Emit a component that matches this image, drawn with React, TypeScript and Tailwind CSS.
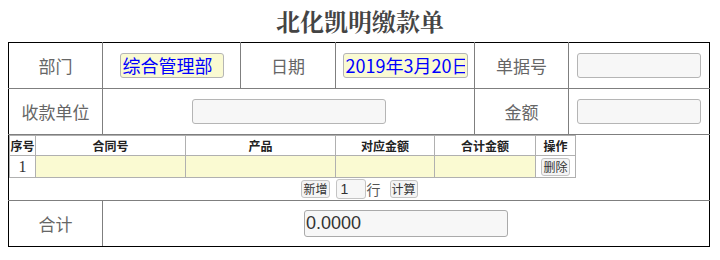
const cjk = "font-['Microsoft_YaHei','Noto_Sans_CJK_SC',sans-serif]";

function Field({ value = "", yellow = false, className = "" }: { value?: string; yellow?: boolean; className?: string }) {
  return (
    <input
      readOnly
      value={value}
      className={`h-[25px] rounded-[3px] border border-[#b5b5b5] px-[2px] text-[18px] outline-none ${cjk} ${
        yellow ? "bg-[#fafad2] text-[#0000ff]" : "bg-[#f7f7f7] text-[#333]"
      } ${className}`}
    />
  );
}

function SmallButton({ label }: { label: string }) {
  return (
    <button
      type="button"
      className={`h-[18px] rounded-[3px] border border-[#c4c4c4] bg-[#f4f4f4] px-[1px] text-[12px] leading-none text-[#333] ${cjk}`}
    >
      {label}
    </button>
  );
}

const label = `border border-[#7f7f7f] text-center text-[17px] text-[#666] ${cjk}`;
const cell = "border border-[#7f7f7f] text-center";
const head = `border border-[#b0b0b0] p-0 text-center text-[12px] font-bold leading-none text-[#222] ${cjk}`;
const data = "border border-[#b0b0b0] bg-[#fafad2] p-0";

export default function App() {
  return (
    <div className="h-[260px] w-[720px] bg-white">
      <h1 className={`pt-[6px] text-center text-[24px] leading-[30px] font-bold text-[#444] font-['Noto_Serif_CJK_SC','Noto_Sans_CJK_SC',serif]`}>
        北化凯明缴款单
      </h1>
      <table className="ml-[8px] mt-[6px] w-[701px] table-fixed border-collapse border border-black [&>tbody>tr:first-child>td]:border-t-black [&>tbody>tr:last-child>td]:border-b-black [&>tbody>tr>td:first-child]:border-l-black [&>tbody>tr>td:last-child]:border-r-black">
        <colgroup>
          <col className="w-[94px]" />
          <col className="w-[138px]" />
          <col className="w-[95px]" />
          <col className="w-[139px]" />
          <col className="w-[94px]" />
          <col className="w-[141px]" />
        </colgroup>
        <tbody>
          <tr className="h-[46px]">
            <td className={label}>部门</td>
            <td className={cell}>
              <Field yellow value="综合管理部" className="w-[104px]" />
            </td>
            <td className={label}>日期</td>
            <td className={cell}>
              <Field yellow value="2019年3月20日" className="w-[125px]" />
            </td>
            <td className={label}>单据号</td>
            <td className={cell}>
              <Field className="w-[124px]" />
            </td>
          </tr>
          <tr className="h-[46px]">
            <td className={label}>收款单位</td>
            <td className={cell} colSpan={3}>
              <Field className="w-[194px]" />
            </td>
            <td className={label}>金额</td>
            <td className={cell}>
              <Field className="w-[124px]" />
            </td>
          </tr>
          <tr>
            <td colSpan={6} className="border border-[#7f7f7f] p-0 align-top">
              <table className="w-[566px] table-fixed border-collapse">
                <colgroup>
                  <col className="w-[26px]" />
                  <col className="w-[150px]" />
                  <col className="w-[150px]" />
                  <col className="w-[99px]" />
                  <col className="w-[101px]" />
                  <col className="w-[40px]" />
                </colgroup>
                <tbody>
                  <tr className="h-[20px]">
                    <td className={head}>序号</td>
                    <td className={head}>合同号</td>
                    <td className={head}>产品</td>
                    <td className={head}>对应金额</td>
                    <td className={head}>合计金额</td>
                    <td className={head}>操作</td>
                  </tr>
                  <tr className="h-[22px]">
                    <td className="border border-[#b0b0b0] p-0 text-center font-['Liberation_Serif',serif] text-[16px] leading-none text-[#333]">1</td>
                    <td className={data}></td>
                    <td className={data}></td>
                    <td className={data}></td>
                    <td className={data}></td>
                    <td className="border border-[#b0b0b0] p-0 text-center leading-none">
                      <SmallButton label="删除" />
                    </td>
                  </tr>
                </tbody>
              </table>
              <div className="flex h-[22px] items-center justify-center gap-[5px] pl-[1px]">
                <SmallButton label="新增" />
                <input
                  readOnly
                  value="1"
                  className="ml-[1px] h-[20px] w-[30px] rounded-[3px] border border-[#c4c4c4] bg-[#f7f7f7] px-[4px] font-['Liberation_Sans',sans-serif] text-[14px] text-[#333] outline-none"
                />
                <span className={`mr-[4px] -ml-[4px] text-[14px] leading-none text-[#555] ${cjk}`}>行</span>
                <SmallButton label="计算" />
              </div>
            </td>
          </tr>
          <tr className="h-[46px]">
            <td className={label}>合计</td>
            <td className={cell} colSpan={5}>
              <input
                readOnly
                value="0.0000"
                className="h-[27px] w-[204px] rounded-[3px] border border-[#aaa] bg-[#f7f7f7] px-[1px] font-['Liberation_Sans',sans-serif] text-[18px] text-[#333] outline-none"
              />
            </td>
          </tr>
        </tbody>
      </table>
    </div>
  );
}
